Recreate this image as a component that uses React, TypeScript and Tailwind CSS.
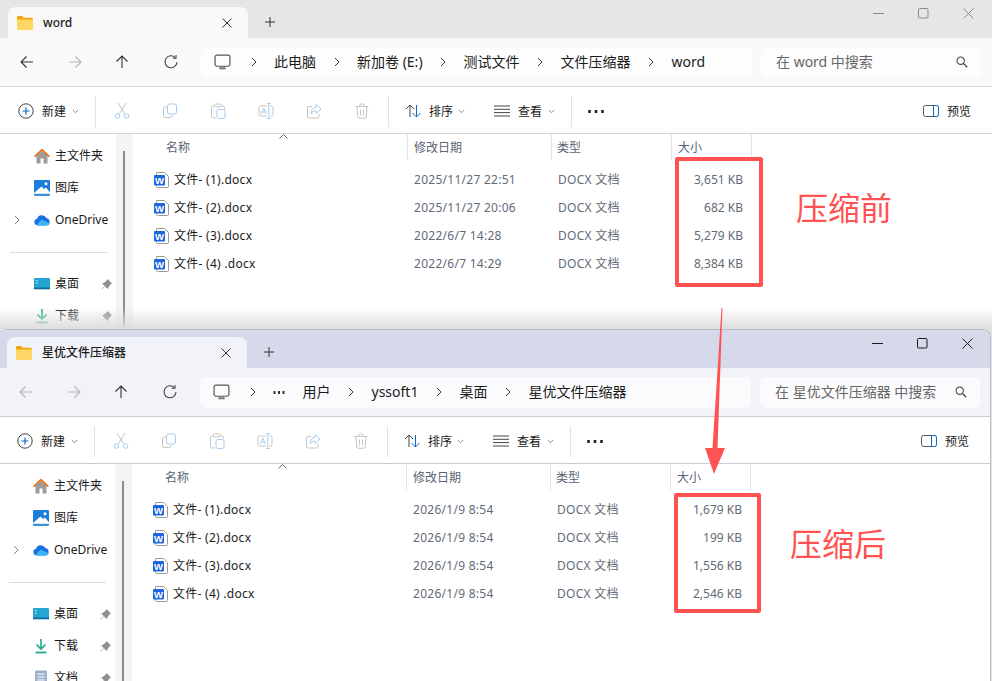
import React from 'react';

const FONT = '"Noto Sans", "Noto Sans CJK SC", sans-serif';

function Glyph({ size = 16, className = '', children }: { size?: number; className?: string; children: React.ReactNode }) {
  return (
    <svg width={size} height={size} viewBox="0 0 16 16" fill="none" className={`shrink-0 ${className}`}>
      {children}
    </svg>
  );
}

const Folder = () => (
  <svg width="16" height="14" viewBox="0 0 16 14" className="shrink-0">
    <path d="M0 1.5C0 .7.6 0 1.4 0h3.7l1.7 1.8H14.500c.8 0 1.500.7 1.500 1.500V5H0z" fill="#f0a90c" />
    <path d="M0 3.500h16v9c0 .8-.7 1.500-1.500 1.500h-13C.7 14 0 13.300 0 12.500z" fill="#fdd663" />
  </svg>
);

const Chevron = ({ color = '#333' }: { color?: string }) => (
  <svg width="6" height="10" viewBox="0 0 6 10" className="shrink-0">
    <path d="M1 1l4 4-4 4" stroke={color} strokeWidth="1" fill="none" />
  </svg>
);

const Caret = () => (
  <svg width="7" height="5" viewBox="0 0 7 5" className="shrink-0">
    <path d="M.8 1l2.700 2.700L6.200 1" stroke="#8a8a8a" strokeWidth="1" fill="none" />
  </svg>
);

const Pc = () => (
  <Glyph size={17} className="mr-[2px]">
    <rect x="1" y="1" width="14" height="10.500" rx="1.800" stroke="#555" strokeWidth="1.100" />
    <path d="M5 13.500h6" stroke="#777" strokeWidth="1.800" />
    <path d="M6.500 11.500v2M9.500 11.500v2" stroke="#777" />
  </Glyph>
);

const ArrowLeft = ({ color }: { color: string }) => (
  <Glyph>
    <path d="M14 8H2M7.500 2.500L2 8l5.500 5.500" stroke={color} strokeWidth="1.100" />
  </Glyph>
);
const ArrowRight = ({ color }: { color: string }) => (
  <Glyph>
    <path d="M2 8h12M8.500 2.500L14 8l-5.500 5.500" stroke={color} strokeWidth="1.100" />
  </Glyph>
);
const ArrowUp = () => (
  <Glyph>
    <path d="M8 14V2M2.500 7.500L8 2l5.500 5.500" stroke="#333" strokeWidth="1.100" />
  </Glyph>
);
const Refresh = () => (
  <Glyph>
    <path d="M12.300 3.600A6 6 0 1 0 14 8" stroke="#444" strokeWidth="1.100" />
    <path d="M13 1v3.200H9.800" stroke="#444" strokeWidth="1.100" />
  </Glyph>
);
const Search = () => (
  <Glyph size={14}>
    <circle cx="6.500" cy="6.500" r="4.200" stroke="#444" strokeWidth="1.200" />
    <path d="M9.700 9.700L14 14" stroke="#444" strokeWidth="1.400" />
  </Glyph>
);

const NewIcon = () => (
  <Glyph>
    <circle cx="8" cy="8" r="7.200" stroke="#444" strokeWidth="1" />
    <path d="M8 4.500v7M4.500 8h7" stroke="#0a6cc4" strokeWidth="1.200" />
  </Glyph>
);
const Cut = () => (
  <Glyph>
    <path d="M4 0l6.500 10.500M12 0L5.500 10.500" stroke="#c4c4c4" strokeWidth="1" />
    <circle cx="3.500" cy="13" r="2.300" stroke="#a5cdf0" strokeWidth="1" />
    <circle cx="12.500" cy="13" r="2.300" stroke="#a5cdf0" strokeWidth="1" />
  </Glyph>
);
const CopyIcon = () => (
  <Glyph>
    <rect x="5.500" y="1" width="9" height="10" rx="2" stroke="#a5cdf0" />
    <path d="M5 4H3.500A2 2 0 0 0 1.500 6v6.500a2 2 0 0 0 2 2H8a2 2 0 0 0 2-2V12" stroke="#c4c4c4" />
  </Glyph>
);
const Paste = () => (
  <Glyph>
    <path d="M4 3H3a1.500 1.500 0 0 0-1.500 1.500v9A1.500 1.500 0 0 0 3 15h3M12 3h1a1.500 1.500 0 0 1 1.500 1.500V6" stroke="#c4c4c4" />
    <rect x="4.500" y="1" width="7" height="2.800" rx="1.200" stroke="#c4c4c4" />
    <rect x="7" y="6.500" width="8" height="9" rx="1.800" stroke="#a5cdf0" />
  </Glyph>
);
const Rename = () => (
  <Glyph>
    <path d="M9 3H2.500A1.500 1.500 0 0 0 1 4.500v7A1.500 1.500 0 0 0 2.500 13H9M12.500 3h1A1.500 1.500 0 0 1 15 4.500v7a1.500 1.500 0 0 1-1.500 1.500h-1" stroke="#c4c4c4" />
    <path d="M10.800.5v15M9 .5h3.600M9 15.500h3.600" stroke="#a5cdf0" />
    <path d="M3.200 11L5.800 5l2.600 6M4.200 9h3.200" stroke="#a5cdf0" />
  </Glyph>
);
const Share = () => (
  <Glyph>
    <path d="M6 3.500H3A1.500 1.500 0 0 0 1.500 5v8.500A1.500 1.500 0 0 0 3 15h8.500a1.500 1.500 0 0 0 1.500-1.500V11" stroke="#c4c4c4" />
    <path d="M10 1.500L15 6l-5 4.500V8C7.500 8 6 9 5 11c0-4 2-6.500 5-6.800z" stroke="#a5cdf0" />
  </Glyph>
);
const Trash = () => (
  <Glyph>
    <path d="M1.500 3.500h13M6 3.500V2a1 1 0 0 1 1-1h2a1 1 0 0 1 1 1v1.500M3 3.500l.8 10.500a1.300 1.300 0 0 0 1.300 1.200h5.800a1.300 1.300 0 0 0 1.300-1.200L13 3.500M6.500 6.500v6M9.500 6.500v6" stroke="#c4c4c4" />
  </Glyph>
);
const Sort = () => (
  <Glyph>
    <path d="M5 14V2M1 6l4-4 4 4" stroke="#444" strokeWidth="1" />
    <path d="M11.500 2v12M7.500 10l4 4 4-4" stroke="#0a6cc4" strokeWidth="1" />
  </Glyph>
);
const ViewIcon = () => (
  <Glyph>
    <path d="M0 3h16M0 6.300h16M0 9.600h16M0 13h16" stroke="#444" strokeWidth="1" />
  </Glyph>
);
const PreviewIcon = () => (
  <Glyph>
    <rect x=".5" y="2.500" width="15" height="11" rx="2" stroke="#555" />
    <path d="M10.500 2.500h3a2 2 0 0 1 2 2v7a2 2 0 0 1-2 2h-3z" fill="#fff" stroke="#0a6cc4" />
  </Glyph>
);

const WordIcon = () => (
  <svg width="15" height="16" viewBox="0 0 15 16" className="shrink-0">
    <path d="M2.500.5h8l4 4v10a1 1 0 0 1-1 1h-10a1 1 0 0 1-1-1z" fill="#fff" stroke="#9a9a9a" />
    <rect x="0" y="3" width="11" height="10.500" rx="1" fill="#1f66e0" />
    <text x="5.500" y="11.700" textAnchor="middle" fontSize="9.500" fontWeight="700" fill="#fff" fontFamily="Liberation Sans, sans-serif">
      W
    </text>
  </svg>
);

const Home = () => (
  <Glyph>
    <path d="M2.500 7.500V15.500h4v-5h3v5h4V7.500L8 3z" fill="#9d9d9d" />
    <path d="M0 8L8 .5 16 8l-1.300 1.300L8 3 1.300 9.300z" fill="#e8731a" />
  </Glyph>
);
const Gallery = () => (
  <Glyph>
    <rect y="0" width="16" height="14.500" rx="1" fill="#1a7fdc" />
    <path d="M0 13L7.500 6.500 10 9l2-1.500 4 5v1.500H0z" fill="#fff" />
    <circle cx="12" cy="3.800" r="1.500" fill="#fff" />
    <path d="M0 13.800h16v1.200a1 1 0 0 1-1 1H1a1 1 0 0 1-1-1z" fill="#3f8fd8" />
  </Glyph>
);
const OneDrive = () => (
  <Glyph>
    <path d="M3.500 13.500A3.400 3.400 0 0 1 3 6.800 5 5 0 0 1 12.300 6 3.800 3.800 0 0 1 12.500 13.500z" fill="#1b6fe0" />
    <path d="M2.500 13l5-5.500 8.300 3.700a3.200 3.200 0 0 1-3.300 2.300H3.500z" fill="#3fb4f2" />
  </Glyph>
);
const Desktop = () => (
  <Glyph>
    <rect y="2" width="16" height="11" rx="1" fill="#25a5d3" />
    <rect y="11.500" width="16" height="1.800" fill="#0f6c9c" />
    <path d="M2 4.500h1.500M2 7h1.500" stroke="#d6f1fb" strokeWidth="1.200" />
  </Glyph>
);
const Download = () => (
  <Glyph>
    <path d="M8 1v9.500M3.500 6.500L8 11l4.500-4.500" stroke="#1eab8a" strokeWidth="1.600" fill="none" />
    <path d="M2.500 14.500h11" stroke="#1eab8a" strokeWidth="1.800" />
  </Glyph>
);
const Docs = () => (
  <Glyph>
    <rect x="2" y=".5" width="12" height="15" rx="1" fill="#9fb0cd" />
    <path d="M4.500 4h7M4.500 7h7M4.500 10h7" stroke="#fff" strokeWidth="1.200" />
  </Glyph>
);
const Pin = () => (
  <svg width="11" height="11" viewBox="0 0 11 11" className="shrink-0">
    <path d="M6.700.5l3.800 3.800-1 .6-2.300 3.300-.5 1.500L1.600 4.600l1.500-.5L6.100 1.500zM3.500 7.500L.8 10.200" fill="#8f8f8f" stroke="#8f8f8f" strokeWidth=".7" />
  </svg>
);

type WindowProps = {
  accent: boolean;
  tab: string;
  crumbs: string[];
  search: string;
  files: { name: string; date: string; size: string }[];
  height: string;
};

const toolIcons = [Cut, CopyIcon, Paste, Rename, Share, Trash];

function FileWindow({ accent, tab, crumbs, search, files, height }: WindowProps) {
  const ctl = accent ? '#1c1c1c' : '#8a8a8a';
  return (
    <div
      className={`relative w-[992px] overflow-hidden bg-white ${height} ${
        accent ? '-ml-px border-t border-r border-[#b9bbc6] rounded-t-lg' : ''
      }`}
    >
      {/* tab strip */}
      <div className={`flex h-[38px] items-end pl-2 ${accent ? 'bg-[#d5d9ea]' : 'bg-[#e6e6e6]'}`}>
        <div
          className={`flex h-[31px] w-[240px] items-center rounded-t-lg pl-[9px] pr-4 ${
            accent ? 'bg-[#f2f3f9]' : 'bg-[#f8f8f8]'
          }`}
        >
          <Folder />
          <span className="ml-[10px] flex-1 text-[12px] font-medium text-[#1a1a1a]">{tab}</span>
          <svg width="10" height="10" viewBox="0 0 10 10" className="shrink-0">
            <path d="M.5.5l9 9M9.500.5l-9 9" stroke="#333" strokeWidth="1" />
          </svg>
        </div>
        <div className="mb-[11px] ml-[17px] flex h-[10px] w-[10px] items-center justify-center">
          <svg width="10" height="10" viewBox="0 0 10 10">
            <path d="M5 0v10M0 5h10" stroke="#333" strokeWidth="1" />
          </svg>
        </div>
        <div className="mb-[19px] ml-auto flex items-center">
          <div className="flex w-[45px] justify-center">
            <svg width="11" height="11" viewBox="0 0 11 11">
              <path d="M0 5.500h11" stroke={ctl} />
            </svg>
          </div>
          <div className="flex w-[45px] justify-center">
            <svg width="11" height="11" viewBox="0 0 11 11">
              <rect x=".5" y=".5" width="9.500" height="9.500" rx="1" stroke={ctl} fill="none" />
            </svg>
          </div>
          <div className="flex w-[45px] justify-center pr-px">
            <svg width="11" height="11" viewBox="0 0 11 11">
              <path d="M.5.500l10 10M10.500.5l-10 10" stroke={ctl} />
            </svg>
          </div>
          {!accent && <div className="w-px" />}
        </div>
      </div>

      {/* address row */}
      <div
        className={`flex h-[49px] items-center border-b ${
          accent ? 'border-[#c8cad8] bg-[#f2f3f9]' : 'border-[#d6d6d6] bg-[#f9f9f9]'
        }`}
      >
        <div className="flex w-[201px] items-center pl-[19px]">
          <ArrowLeft color={accent ? '#b5b5b5' : '#333'} />
          <div className="ml-8">
            <ArrowRight color="#b5b5b5" />
          </div>
          <div className="ml-[31px]">
            <ArrowUp />
          </div>
          <div className="ml-[33px]">
            <Refresh />
          </div>
        </div>
        <div
          className={`flex h-[31px] w-[551px] items-center gap-[17.500px] rounded-md pl-[13px] text-[14px] text-[#1a1a1a] ${
            accent ? 'bg-[#fbfbfe]' : 'bg-[#fdfdfd]'
          }`}
        >
          <Pc />
          {crumbs.map((c, i) => (
            <React.Fragment key={c}>
              {crumbs[i - 1] !== '...' && <Chevron />}
              {c === '...' ? (
                <svg width="12" height="3" viewBox="0 0 12 3" className="shrink-0">
                  <path d="M1.500 0v3M6 0v3M10.500 0v3" stroke="#333" strokeWidth="2" />
                </svg>
              ) : (
                <span className="mb-[2px] whitespace-nowrap">{c}</span>
              )}
            </React.Fragment>
          ))}
        </div>
        <div
          className={`ml-[9px] flex h-[31px] w-[220px] items-center justify-between rounded-md pl-[15px] pr-[12px] text-[14px] text-[#666] ${
            accent ? 'bg-[#fbfbfe]' : 'bg-[#fdfdfd]'
          }`}
        >
          <span className="mb-[2px] whitespace-nowrap">{search}</span>
          <Search />
        </div>
      </div>

      {/* command bar */}
      <div
        className={`flex h-[47px] items-center border-b pl-[18px] pr-[21px] pt-[2px] text-[12px] text-[#1a1a1a] ${
          accent ? 'border-[#c8cad8]' : 'border-[#d6d6d6]'
        }`}
      >
        <NewIcon />
        <span className="ml-[8px] mt-[2px]">新建</span>
        <span className="ml-[6px]">
          <Caret />
        </span>
        <div className="ml-[16px] h-[31px] w-px bg-[#e3e3e3]" />
        <div className="ml-[18px] flex gap-8">
          {toolIcons.map((Icon, i) => (
            <Icon key={i} />
          ))}
        </div>
        <div className="ml-[18px] h-[31px] w-px bg-[#e3e3e3]" />
        <div className="ml-[16px]">
          <Sort />
        </div>
        <span className="ml-[8px] mt-[2px]">排序</span>
        <span className="ml-[5px]">
          <Caret />
        </span>
        <div className="ml-[29px]">
          <ViewIcon />
        </div>
        <span className="ml-[8px] mt-[2px]">查看</span>
        <span className="ml-[6px]">
          <Caret />
        </span>
        <div className="ml-[16px] h-[31px] w-px bg-[#e3e3e3]" />
        <svg width="16" height="3" viewBox="0 0 16 3" className="ml-[16px] shrink-0">
          <path d="M1.500 0v3M8 0v3M14.500 0v3" stroke="#222" strokeWidth="2.600" />
        </svg>
        <div className="ml-auto">
          <PreviewIcon />
        </div>
        <span className="ml-[8px] mt-[2px]">预览</span>
      </div>

      {/* body */}
      <div className="flex">
        <div className="w-[116px] shrink-0 pt-[6px] text-[12px] text-[#1a1a1a]">
          <NavItem icon={<Home />} label="主文件夹" />
          <NavItem icon={<Gallery />} label="图库" />
          <NavItem icon={<OneDrive />} label="OneDrive" expand />
          <div className="flex h-[32px] items-center pl-[10px]">
            <div className="h-px w-[97px] bg-[#dcdcdc]" />
          </div>
          <NavItem icon={<Desktop />} label="桌面" pin />
          <NavItem icon={<Download />} label="下载" pin />
          {accent && <NavItem icon={<Docs />} label="文档" pin />}
        </div>
        <div className="h-[400px] w-[17px] shrink-0 bg-[#f4f4f4] pl-[7px] pt-[17px]">
          <div className="h-full w-[2px] bg-[#8c8c8c]" />
        </div>
        <div className="flex-1 text-[12px]">
          <div className="relative grid h-[26px] grid-cols-[275px_144px_120px_80px] text-[#5a6472]">
            <div className="border-r border-[#e5e5e5] pl-[33px] pt-[5px]">名称</div>
            <div className="border-r border-[#e5e5e5] pl-[6px] pt-[5px]">修改日期</div>
            <div className="border-r border-[#e5e5e5] pl-[5px] pt-[5px]">类型</div>
            <div className="border-r border-[#e5e5e5] pl-[6px] pt-[5px]">大小</div>
            <svg width="9" height="5" viewBox="0 0 9 5" className="absolute left-[146px] top-0">
              <path d="M.5 4.500l4-4 4 4" stroke="#666" fill="none" />
            </svg>
          </div>
          <div className="pt-[6px] tracking-[0.27px]">
            {files.map((f) => (
              <div key={f.name} className="grid h-[28px] grid-cols-[275px_144px_120px_80px] items-center text-[#626b78]">
                <div className="flex items-center gap-[5px] pl-[21px] text-[#1a1a1a]">
                  <WordIcon />
                  <span className="whitespace-pre">{f.name}</span>
                </div>
                <div className="pl-[6px]">{f.date}</div>
                <div className="pl-[6px]">DOCX 文档</div>
                <div className="pr-[9px] text-right tracking-normal">{f.size}</div>
              </div>
            ))}
          </div>
        </div>
      </div>

      {!accent && (
        <div className="absolute inset-x-0 bottom-0 h-[22px] bg-gradient-to-b from-white/0 to-[#dedede]" />
      )}
    </div>
  );
}

function NavItem({ icon, label, pin, expand }: { icon: React.ReactNode; label: string; pin?: boolean; expand?: boolean }) {
  return (
    <div className="flex h-[32px] items-center">
      <div className="flex w-[34px] justify-center">{expand && <Chevron color="#888" />}</div>
      {icon}
      <span className="ml-[5px] whitespace-nowrap">{label}</span>
      {pin && (
        <span className="ml-auto pr-[4px]">
          <Pin />
        </span>
      )}
    </div>
  );
}

export default function App() {
  return (
    <div className="relative h-[681px] w-[992px] overflow-hidden bg-[#e4e4e4]" style={{ fontFamily: FONT }}>
      <FileWindow
        accent={false}
        tab="word"
        crumbs={['此电脑', '新加卷 (E:)', '测试文件', '文件压缩器', 'word']}
        search="在 word 中搜索"
        height="h-[329px]"
        files={[
          { name: '文件- (1).docx', date: '2025/11/27 22:51', size: '3,651 KB' },
          { name: '文件- (2).docx', date: '2025/11/27 20:06', size: '682 KB' },
          { name: '文件- (3).docx', date: '2022/6/7 14:28', size: '5,279 KB' },
          { name: '文件- (4) .docx', date: '2022/6/7 14:29', size: '8,384 KB' },
        ]}
      />
      <FileWindow
        accent
        tab="星优文件压缩器"
        crumbs={['...', '用户', 'yssoft1', '桌面', '星优文件压缩器']}
        search="在 星优文件压缩器 中搜索"
        height="h-[352px]"
        files={[
          { name: '文件- (1).docx', date: '2026/1/9 8:54', size: '1,679 KB' },
          { name: '文件- (2).docx', date: '2026/1/9 8:54', size: '199 KB' },
          { name: '文件- (3).docx', date: '2026/1/9 8:54', size: '1,556 KB' },
          { name: '文件- (4) .docx', date: '2026/1/9 8:54', size: '2,546 KB' },
        ]}
      />

      {/* red annotations */}
      <div className="absolute left-[675px] top-[157px] h-[130px] w-[88px] rounded-[2px] border-4 border-[#ff5252]" />
      <div className="absolute left-[674px] top-[493px] h-[120px] w-[87px] rounded-[2px] border-4 border-[#ff5252]" />
      <div className="absolute left-[796px] top-[185px] text-[32px] leading-[46px] text-[#ff5252]">压缩前</div>
      <div className="absolute left-[790px] top-[521px] text-[32px] leading-[46px] text-[#ff5252]">压缩后</div>
      <svg width="30" height="170" viewBox="0 0 30 170" className="absolute left-[700px] top-[308px]">
        <path d="M21.500 0L22.500 0L17.500 140L25 140L14 166L5 140L12.500 140Z" fill="#ff5252" />
      </svg>
    </div>
  );
}
